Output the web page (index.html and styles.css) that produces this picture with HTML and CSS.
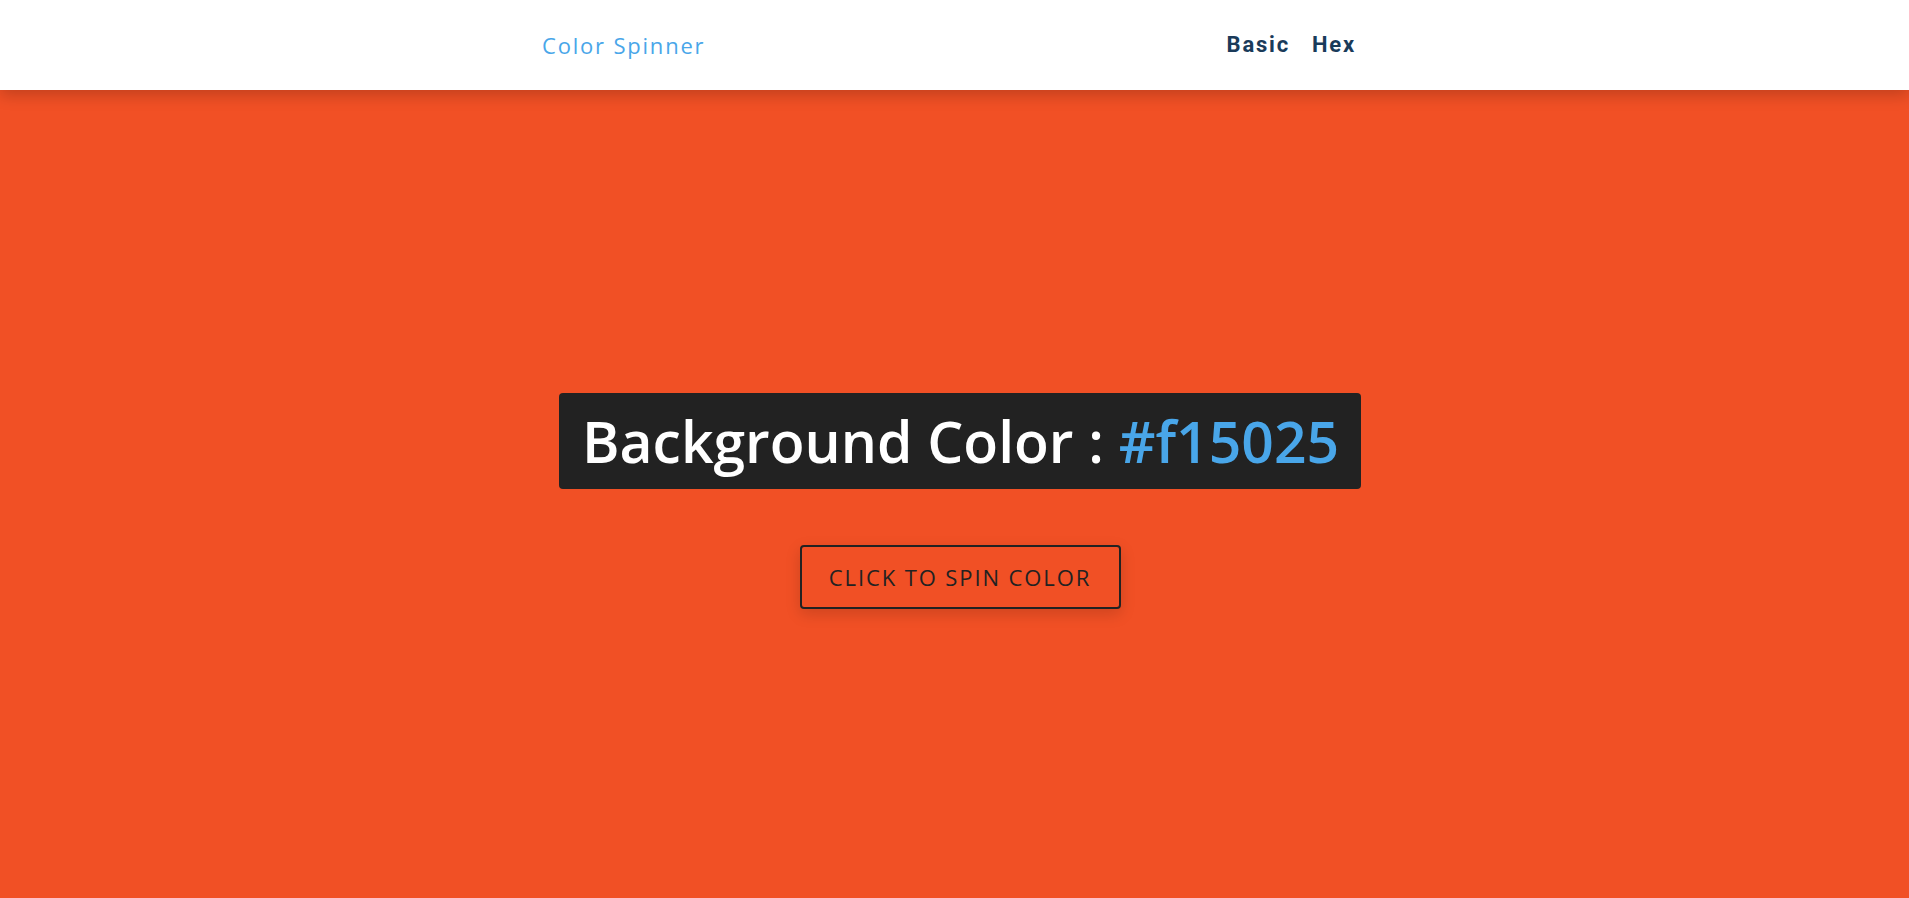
FILE: index.html
```html
<!DOCTYPE html>
<html lang="en">
<head>
<meta charset="utf-8">
<title>Color Spinner</title>
<link rel="stylesheet" href="styles.css">
</head>
<body>
<nav class="nav">
  <div class="nav-center">
    <h4 class="brand">Color Spinner</h4>
    <ul class="nav-links">
      <li><a href="#" class="nav-link">Basic</a></li>
      <li><a href="#" class="nav-link">Hex</a></li>
    </ul>
  </div>
</nav>
<main class="main">
  <div class="container">
    <h2 class="title">Background Color : <span class="color">#f15025</span></h2>
    <button class="btn-hero" type="button">click to spin color</button>
  </div>
</main>
</body>
</html>
```

FILE: styles.css
```css
* { box-sizing: border-box; margin: 0; padding: 0; }
html, body { height: 100%; }
body {
  font-family: "Open Sans", sans-serif;
  background: #f15025;
  overflow: hidden;
}
.nav {
  position: relative;
  z-index: 2;
  background: #fff;
  height: 90px;
  display: flex;
  align-items: center;
  box-shadow: 0 5px 15px rgba(0, 0, 0, 0.2);
}
.nav-center {
  width: 825px;
  margin: 0 auto;
  display: flex;
  justify-content: space-between;
  align-items: center;
}
.brand {
  font-family: "Open Sans", sans-serif;
  font-weight: 400;
  font-size: 22px;
  letter-spacing: 1.8px;
  color: #49a6e9;
  line-height: 1;
}
.nav-links { display: flex; list-style: none; padding-right: 11px; }
.nav-link {
  display: block;
  font-family: Roboto, sans-serif;
  font-weight: 700;
  font-size: 22px;
  letter-spacing: 1.8px;
  color: #1a3b5a;
  text-decoration: none;
  margin-left: 22px;
  line-height: 1;
}
.main {
  height: calc(100vh - 90px);
  display: flex;
  align-items: center;
  justify-content: center;
  padding-top: 14px;
  padding-left: 11px;
}
.container {
  display: flex;
  flex-direction: column;
  align-items: center;
}
.title {
  background: #222;
  color: #fff;
  font-weight: 600;
  font-size: 57px;
  line-height: 64px;
  padding: 16px 22px 16px 23px;
  border-radius: 4px;
  margin-bottom: 56px;
  white-space: nowrap;
}
.color { color: #49a6e9; }
.btn-hero {
  font-family: "Open Sans", sans-serif;
  text-transform: uppercase;
  background: transparent;
  color: #222;
  font-size: 22px;
  font-weight: 400;
  letter-spacing: 1.9px;
  width: 321px;
  height: 64px;
  border: 2px solid #222;
  border-radius: 4px;
  box-shadow: 0 5px 15px rgba(0, 0, 0, 0.15);
  cursor: pointer;
}
```
